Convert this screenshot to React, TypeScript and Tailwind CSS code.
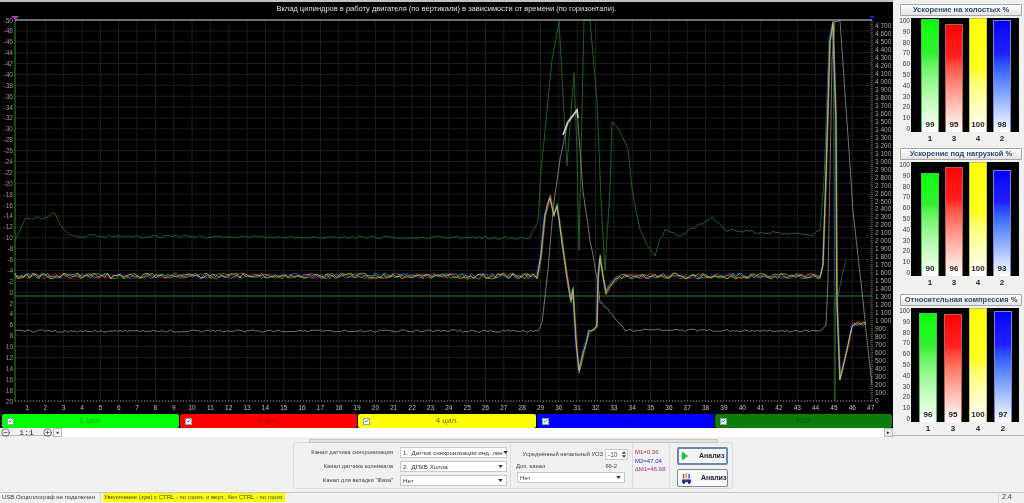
import React from "react";
import { CircleMinus, CirclePlus } from "lucide-react";

type Pt = [number, number];

const makeRand = (seed: number) => {
  let i = 0;
  return () => {
    i += 1;
    const v = Math.sin(seed * 12.9898 + i * 78.233) * 43758.5453;
    return v - Math.floor(v);
  };
};

// walks through key points and adds some jitter, so traces look like sensor data
const trace = (keys: Pt[], seed: number, amp: number, step = 2, dx = 0) => {
  const rand = makeRand(seed);
  const out: string[] = [];
  for (let i = 0; i < keys.length - 1; i++) {
    const [x0, y0] = keys[i];
    const [x1, y1] = keys[i + 1];
    const n = Math.max(1, Math.round((x1 - x0) / step));
    for (let j = 0; j < n; j++) {
      const t = j / n;
      const y = y0 + (y1 - y0) * t + (rand() - 0.5) * amp * 2;
      out.push(`${(x0 + (x1 - x0) * t + dx).toFixed(1)},${y.toFixed(1)}`);
    }
  }
  const last = keys[keys.length - 1];
  out.push(`${last[0] + dx},${last[1]}`);
  return out.join(" ");
};

const cylKeys: Pt[] = [
  [15, 276], [537, 276], [541, 255], [545, 215], [550, 197], [554, 215], [557, 205], [562, 240],
  [566, 270], [571, 300], [573, 290], [576, 340], [579, 372], [584, 350], [589, 332], [597, 326],
  [598, 280], [600, 257], [603, 275], [606, 292], [612, 282], [622, 276], [820, 276], [823, 265],
  [826, 180], [830, 40], [833, 22], [836, 120], [837, 300], [840, 378], [846, 355], [852, 325], [866, 323],
];

const rpmKeys: Pt[] = [
  [15, 331], [538, 331], [542, 323], [548, 270], [553, 210], [560, 160], [568, 122], [577, 110],
  [583, 190], [590, 240], [598, 283], [600, 302], [610, 312], [625, 330], [822, 331], [826, 325],
  [828, 280], [832, 60], [835, 21], [840, 21], [853, 210], [865, 320], [872, 385],
];

const syncKeys: Pt[] = [
  [15, 240], [25, 218], [45, 218], [55, 212], [60, 225], [70, 236], [530, 238], [538, 220], [541, 170],
  [552, 60], [559, 21], [566, 150], [567, 165], [574, 72], [577, 150], [579, 250], [584, 21], [590, 21],
  [597, 100], [601, 200], [605, 270], [610, 190], [612, 122], [622, 135], [628, 150], [632, 190], [640, 230],
  [650, 250], [655, 255], [660, 240], [665, 230], [680, 235], [700, 225], [712, 218], [725, 230], [812, 235],
  [820, 230], [824, 180], [829, 40], [833, 21], [835, 300], [838, 295], [846, 260],
];

const leftTicks = Array.from({ length: 36 }, (_, i) => -50 + i * 2);
const bottomTicks = Array.from({ length: 47 }, (_, i) => i + 1);
const rightTicks = Array.from({ length: 48 }, (_, i) => i * 100);

const Y_TOP = 20;
const Y_BOTTOM = 401;
const yFor = (v: number) => Y_TOP + ((v + 50) / 70) * (Y_BOTTOM - Y_TOP);
const xFor = (n: number) => 27 + (n - 1) * 18.34;
const yRight = (v: number) => 400 - v * 0.0796;

const fmt = (v: number) =>
  v >= 1000 ? `${Math.floor(v / 1000)} ${String(v % 1000).padStart(3, "0")}` : String(v);

const MainChart = () => (
  <svg viewBox="0 16 893 398" className="w-[893px] h-[398px] block bg-black">
    {leftTicks.map((v) => (
      <line key={v} x1={15} x2={872} y1={yFor(v)} y2={yFor(v)} stroke="#1e1e1e" strokeWidth={1} />
    ))}
    {bottomTicks.map((n) => (
      <line key={n} x1={xFor(n)} x2={xFor(n)} y1={20} y2={401} stroke="#1e1e1e" strokeWidth={1} />
    ))}
    <line x1={15} x2={872} y1={296} y2={296} stroke="#24502c" strokeWidth={1.4} />
    <line x1={15} x2={15} y1={20} y2={401} stroke="#2f8a36" strokeWidth={1} />
    <line x1={15} x2={872} y1={401} y2={401} stroke="#8a8a8a" strokeDasharray="1 2" />
    <line x1={872} x2={872} y1={20} y2={401} stroke="#9a9a80" strokeDasharray="1 1" />

    {leftTicks.map((v) => (
      <text key={v} x={13} y={yFor(v) + 2.5} textAnchor="end" fontSize={6.5} fill="#9a9a9a">
        {v}
      </text>
    ))}
    {bottomTicks.map((n) => (
      <text key={n} x={xFor(n)} y={410} textAnchor="middle" fontSize={6.5} fill="#c0c0c0">
        {n}
      </text>
    ))}
    {rightTicks.map((v) => (
      <text key={v} x={875} y={yRight(v) + 2.5} fontSize={6.5} fill="#b0b0a0">
        {fmt(v)}
      </text>
    ))}

    <polyline points={trace(syncKeys, 11, 1.5, 3)} fill="none" stroke="#226a26" strokeWidth={0.9} />
    <line x1={835} x2={835} y1={300} y2={401} stroke="#2c8a30" strokeWidth={1} />
    <polyline points={trace(rpmKeys, 23, 1.2, 2.5)} fill="none" stroke="#a4a4a4" strokeWidth={0.7} />
    <polyline points="563,135 568,122 577,110 578,118" fill="none" stroke="#c8c8c8" strokeWidth={1.8} />

    <polyline points={trace(cylKeys, 5, 3, 3, -0.8)} fill="none" stroke="#1818ff" strokeWidth={0.8} />
    <polyline points={trace(cylKeys, 31, 3, 3, 0.6)} fill="none" stroke="#e81818" strokeWidth={0.7} />
    <polyline points={trace(cylKeys, 47, 3, 3, 0.2)} fill="none" stroke="#20d020" strokeWidth={0.7} />
    <polyline points={trace(cylKeys, 73, 3, 3, -0.3)} fill="none" stroke="#e0d820" strokeWidth={0.6} />
    <polyline points={trace(cylKeys, 97, 2.5, 3)} fill="none" stroke="#d0d0d0" strokeWidth={0.4} />

    <line x1={15} x2={872} y1={20} y2={20} stroke="#d0d0d0" strokeWidth={1} />
    <polygon points="11,16 19,16 15,20" fill="#c030c0" />
    <polygon points="868,15 876,15 872,19" fill="#1a1ae0" />
  </svg>
);

const cylinders = [
  { label: "1 цил.", box: "bg-[#00ff00] text-[#0a9a0a]" },
  { label: "3 цил.", box: "bg-[#ff0000] text-[#b00000]" },
  { label: "4 цил.", box: "bg-[#ffff00] text-[#6a6a00]" },
  { label: "2 цил.", box: "bg-[#0000ff] text-[#0000b0]" },
  { label: "УОЗ", box: "bg-[#0b7d0b] text-[#075a07]" },
];

const Legend = () => (
  <div className="h-[14px] flex pl-[2px] pr-[1px] gap-[1px] bg-black">
    {cylinders.map((c) => (
      <div key={c.label} className={`flex-1 rounded-[2px] flex items-center relative justify-center text-[8px] ${c.box}`}>
        <span className="absolute left-[5px] top-[3.5px] w-[7px] h-[7px] bg-white border border-[#8aa] flex items-center justify-center">
          <svg viewBox="0 0 8 8" className="w-[6px] h-[6px]">
            <path d="M1 4 L3 6 L7 1.5" fill="none" stroke="#2a5a9a" strokeWidth={1.4} />
          </svg>
        </span>
        {c.label}
      </div>
    ))}
  </div>
);

const ZoomRow = () => (
  <div className="h-[9px] w-[893px] flex items-center pl-[1px] text-[8px] text-[#222]">
    <CircleMinus size={9} strokeWidth={1.6} />
    <span className="w-[33px] text-center font-['Liberation_Mono',monospace]">1:1</span>
    <CirclePlus size={9} strokeWidth={1.6} />
    <div className="w-[9px] h-[9px] ml-[1px] bg-[#f0f0f0] border border-[#bbb] flex items-center justify-center text-[5px]">◂</div>
    <div className="flex-1 h-[9px] bg-white" />
    <div className="w-[9px] h-[9px] bg-[#e8e8e8] border border-[#bbb] flex items-center justify-center text-[5px]">▸</div>
  </div>
);

type Bar = { name: string; value: number; fill: string };

const yLabels = [100, 90, 80, 70, 60, 50, 40, 30, 20, 10, 0];

const BarPanel = ({ title, bars, className, plotClass }: { title: string; bars: Bar[]; className: string; plotClass: string }) => (
  <div className={className}>
    <div className="h-[12px] rounded-[1px] border border-[#a8a8a8] bg-linear-to-b from-white to-[#e2e2e2] text-center text-[7.5px] leading-[10px] font-bold text-[#2c4a70]">
      {title}
    </div>
    <div className="mt-[2px] h-[114px] flex">
      <div className="w-[11px] h-[114px] flex flex-col justify-between items-end pr-[1px] text-[6.5px] leading-[6px] text-[#333]">
        {yLabels.map((v) => (
          <span key={v}>{v}</span>
        ))}
      </div>
      <div className={`w-[108px] h-[114px] bg-black flex items-end ${plotClass}`}>
        {bars.map((b) => (
          <div key={b.name} className={`w-[18px] flex items-end justify-center border-t border-x ${b.fill}`} style={{ height: `${b.value}%` }}>
            <span className="text-[8px] font-bold text-[#222] leading-[14px]">{b.value}</span>
          </div>
        ))}
      </div>
    </div>
    <div className={`ml-[11px] w-[108px] h-[14px] flex ${plotClass}`}>
      {bars.map((b) => (
        <span key={b.name} className="w-[18px] text-center text-[8px] leading-[14px] font-bold text-[#222]">{b.name}</span>
      ))}
    </div>
  </div>
);

const green = "bg-linear-to-b from-[#00ff00] via-[#30f030] via-30% to-white border-[#50c050]";
const red = "bg-linear-to-b from-[#ff0000] via-[#ff2020] via-30% to-white border-[#b06060]";
const yellow = "bg-linear-to-b from-[#ffff00] via-[#ffff20] via-45% to-white border-[#c8c840]";
const blue = "bg-linear-to-b from-[#0000ff] via-[#2020ff] via-30% to-white border-[#8080d0]";

const makeBars = (a: number, b: number, c: number, d: number): Bar[] => [
  { name: "1", value: a, fill: green },
  { name: "3", value: b, fill: red },
  { name: "4", value: c, fill: yellow },
  { name: "2", value: d, fill: blue },
];

const Select = ({ text, className }: { text: string; className: string }) => (
  <div className={`h-[11px] bg-white border border-[#c8c8c8] flex items-center justify-between pl-[2px] pr-[3px] text-[6.2px] text-[#333] ${className}`}>
    <span className="whitespace-pre">{text}</span>
    <svg viewBox="0 0 6 4" className="w-[5px] h-[3px] shrink-0">
      <path d="M0 0 H6 L3 4 Z" fill="#333" />
    </svg>
  </div>
);

const ControlPanel = () => (
  <div className="ml-[293px] w-[440px] h-[47px] mt-[6px] border border-[#dcdcdc] rounded-[3px] flex text-[5.8px] text-[#444] relative">
    <div className="absolute -top-[4px] left-[15px] w-[409px] h-[4px] border border-[#c4c4c4] bg-[#e4e4e4]" />
    <div className="w-[217px] pt-[4px] pl-[14px] flex flex-col gap-[3px] border-r border-[#dedede]">
      {[
        ["Канал датчика синхронизации", "1.  Датчик синхронизации инд. лин"],
        ["Канал датчика коленвала", "2.  ДПКВ Холла"],
        ['Канал для вкладки "Фаза"', "Нет"],
      ].map(([label, value]) => (
        <div key={label} className="flex items-center">
          <span className="w-[85px] text-right whitespace-nowrap">{label}</span>
          <Select text={value} className="ml-[7px] w-[107px]" />
        </div>
      ))}
    </div>
    <div className="w-[122px] pt-[6px] pl-[5px] flex flex-col border-r border-[#dedede]">
      <div className="flex items-center h-[11px]">
        <span className="w-[87px] text-right whitespace-nowrap">Усреднённый начальный УОЗ</span>
        <div className="ml-[2px] w-[23px] h-[11px] bg-white border border-[#c8c8c8] flex items-center justify-between pl-[2px] pr-[1px] text-[6.5px]">
          -10
          <span className="flex flex-col gap-[1px]">
            <svg viewBox="0 0 6 4" className="w-[4px] h-[3px]"><path d="M3 0 L6 4 H0 Z" fill="#333" /></svg>
            <svg viewBox="0 0 6 4" className="w-[4px] h-[3px]"><path d="M0 0 H6 L3 4 Z" fill="#333" /></svg>
          </span>
        </div>
      </div>
      <div className="flex justify-between w-[101px] mt-[3px] leading-[7px]">
        <span>Доп. канал</span>
        <span>66-2</span>
      </div>
      <Select text="Нет" className="mt-[2px] ml-[1px] w-[108px]" />
    </div>
    <div className="w-[36px] pt-[5px] pl-[2px] flex flex-col text-[6px] leading-[8.5px] whitespace-nowrap">
      <span className="text-[#b03040]">M1=0.36</span>
      <span className="text-[#3030a0]">M2=47.04</span>
      <span className="text-[#a030a0]">∆M1=46.68</span>
    </div>
    <div className="pl-[7px] pt-[4px] flex flex-col gap-[4px] border-l border-[#dedede]">
      <div className="w-[51px] h-[18px] border-2 border-[#6a8aa8] rounded-[2px] bg-[#f4f4f4] flex items-center text-[7px] font-bold text-[#223]">
        <svg viewBox="0 0 8 12" className="w-[6px] h-[10px] ml-[3px]"><path d="M0 0 L8 6 L0 12 Z" fill="#20c040" /></svg>
        <span className="ml-[11px]">Анализ</span>
      </div>
      <div className="w-[51px] h-[18px] border border-[#7a8a9a] rounded-[2px] bg-[#f8f8f8] flex items-center text-[7px] font-bold text-[#223]">
        <svg viewBox="0 0 12 12" className="w-[11px] h-[11px] ml-[3px]">
          <rect x={2} y={1} width={1.6} height={5} fill="#c04040" />
          <rect x={5} y={0} width={1.6} height={6} fill="#d0a030" />
          <rect x={8} y={1} width={1.6} height={5} fill="#4060c0" />
          <path d="M1 7 H11 V10 H1 Z" fill="#2040a0" />
          <circle cx={3} cy={10.5} r={1.3} fill="#111" />
          <circle cx={9} cy={10.5} r={1.3} fill="#111" />
        </svg>
        <span className="ml-[9px]">Анализ</span>
      </div>
    </div>
  </div>
);

const StatusBar = () => (
  <div className="h-[10px] border-t border-[#c8c8c8] flex items-center text-[6px] text-[#333]">
    <span className="w-[101px] pl-[2px] whitespace-nowrap border-r border-[#d4d4d4]">USB Осциллограф не подключен</span>
    <span className="ml-[2px] bg-[#ffff00] text-[#444] whitespace-nowrap px-[1px]">
      Увеличение (зум) с CTRL - по гориз. и верт., без CTRL - по гориз.
    </span>
    <span className="ml-auto w-[26px] pl-[3px] border-l border-[#d4d4d4] text-[7px]">2.4</span>
  </div>
);

export default function App() {
  return (
    <div className="w-[1024px] h-[503px] bg-[#f0f0f0] overflow-hidden blur-[0.3px] font-['Liberation_Sans',sans-serif]">
      <div className="flex h-[436px] border-b border-[#b8b8b8]">
        <div className="w-[893px] shrink-0">
          <div className="h-[2px] bg-[#c0c0c0]" />
          <div className="h-[14px] bg-black text-center text-[7.5px] leading-[13px] text-[#e0e0e0] whitespace-nowrap">
            Вклад цилиндров в работу двигателя (по вертикали) в зависимости от времени (по горизонтали).
          </div>
          <MainChart />
          <Legend />
          <ZoomRow />
        </div>
        <div className="w-[131px] pl-[7px] pr-[2px] pt-[4px]">
          <BarPanel title="Ускорение на холостых %" bars={makeBars(99, 95, 100, 98)} className="" plotClass="pl-[10px] gap-[6px]" />
          <BarPanel title="Ускорение под нагрузкой %" bars={makeBars(90, 96, 100, 93)} className="mt-[2px]" plotClass="pl-[10px] gap-[6px]" />
          <BarPanel title="Относительная компрессия %" bars={makeBars(96, 95, 100, 97)} className="mt-[4px]" plotClass="pl-[8px] gap-[7px]" />
        </div>
      </div>
      <ControlPanel />
      <div className="mt-[3px]">
        <StatusBar />
      </div>
    </div>
  );
}
